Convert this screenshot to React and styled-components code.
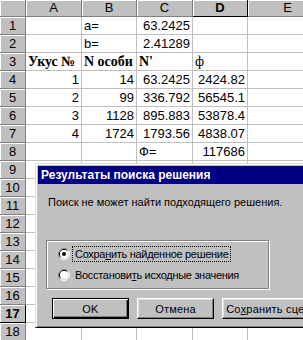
import React from 'react'
import styled, { createGlobalStyle, css } from 'styled-components'

const GlobalStyle = createGlobalStyle`
    html, body {
        margin: 0;
        padding: 0;
        width: 303px;
        height: 340px;
        overflow: hidden;
        background: #ffffff;
    }
`

const columns = ['A', 'B', 'C', 'D', 'E']

// each row: cells for A..E, a cell is text or { t, left, bold, serif }
const rows = [
    ['', { t: 'a=', left: true }, '63.2425', '', ''],
    ['', { t: 'b=', left: true }, '2.41289', '', ''],
    [
        { t: 'Укус №', left: true, bold: true, serif: true },
        { t: 'N особи', left: true, bold: true, serif: true },
        { t: "N'", left: true, bold: true, serif: true },
        { t: 'ф', left: true, serif: true },
        '',
    ],
    ['1', '14', '63.2425', '2424.82', ''],
    ['2', '99', '336.792', '56545.1', ''],
    ['3', '1128', '895.883', '53878.4', ''],
    ['4', '1724', '1793.56', '4838.07', ''],
    ['', '', { t: 'Ф=', left: true }, '117686', ''],
]

function Radio({ checked }) {
    return (
        <RadioIcon width="12" height="12" viewBox="0 0 12 12">
            <path d="M2.11 9.89 A5.5 5.5 0 0 1 9.89 2.11" stroke="#808080" fill="none" />
            <path d="M9.89 2.11 A5.5 5.5 0 0 1 2.11 9.89" stroke="#ffffff" fill="none" />
            <path d="M2.82 9.18 A4.5 4.5 0 0 1 9.18 2.82" stroke="#000000" fill="none" />
            <path d="M9.18 2.82 A4.5 4.5 0 0 1 2.82 9.18" stroke="#dfdfdf" fill="none" />
            <circle cx="6" cy="6" r="4" fill="#ffffff" />
            {checked && <circle cx="6" cy="6" r="2" fill="#000000" />}
        </RadioIcon>
    )
}

function App() {
    return (
        <Screen>
            <GlobalStyle />
            <Sheet>
                <Corner />
                {columns.map(c => (
                    <ColHeader key={c} $selected={c === 'D'}>{c}</ColHeader>
                ))}
                {Array.from({ length: 18 }, (_, i) => {
                    const data = rows[i] || ['', '', '', '', '']
                    return (
                        <React.Fragment key={i}>
                            <RowHeader $selected={i === 16}>{i + 1}</RowHeader>
                            {data.map((cell, j) => {
                                const c = typeof cell === 'string' ? { t: cell } : cell
                                return (
                                    <Cell key={j} $left={c.left} $bold={c.bold} $serif={c.serif}>
                                        {c.t}
                                    </Cell>
                                )
                            })}
                        </React.Fragment>
                    )
                })}
            </Sheet>

            <Dialog>
                <TitleBar>Результаты поиска решения</TitleBar>
                <DialogBody>
                    <Message>Поиск не может найти подходящего решения.</Message>
                    <GroupBox>
                        <RadioRow>
                            <Radio checked />
                            <RadioLabel $focused>
                                Сохра<u>н</u>ить найденное решение
                            </RadioLabel>
                        </RadioRow>
                        <RadioRow>
                            <Radio />
                            <RadioLabel>
                                Восстанови<u>т</u>ь исходные значения
                            </RadioLabel>
                        </RadioRow>
                    </GroupBox>
                    <ButtonRow>
                        <Button $default>OK</Button>
                        <Button>Отмена</Button>
                        <Button $wide>Со<u>х</u>ранить сценарий...</Button>
                    </ButtonRow>
                </DialogBody>
            </Dialog>
        </Screen>
    )
}

const Screen = styled.div`
    position: relative;
    width: 303px;
    height: 340px;
    overflow: hidden;
    background: #ffffff;
`

const Sheet = styled.div`
    display: grid;
    grid-template-columns: 26px 56px 55px 56px 55px 80px;
    grid-template-rows: 17px repeat(18, 18px);
    font-family: "Liberation Sans", Arial, sans-serif;
    font-size: 13px;
    color: #000000;
`

const headerBase = css`
    box-sizing: border-box;
    background: #c0c0c0;
    border-right: 1px solid #808080;
    border-bottom: 1px solid #808080;
    box-shadow: inset 1px 1px 0 #ffffff;
    text-align: center;
    white-space: nowrap;
`

const Corner = styled.div`
    ${headerBase}
`

const ColHeader = styled.div`
    ${headerBase}
    line-height: 16px;
    font-weight: ${p => (p.$selected ? 'bold' : 'normal')};
    ${p => p.$selected && css`
        border-right-color: #000000;
        border-bottom-color: #000000;
    `}
`

const RowHeader = styled.div`
    ${headerBase}
    line-height: 17px;
    font-weight: ${p => (p.$selected ? 'bold' : 'normal')};
    ${p => p.$selected && css`
        border-right-color: #000000;
        border-bottom-color: #000000;
    `}
`

const Cell = styled.div`
    box-sizing: border-box;
    border-right: 1px solid #c0c0c0;
    border-bottom: 1px solid #c0c0c0;
    padding: 0 2px;
    line-height: 17px;
    white-space: nowrap;
    text-align: ${p => (p.$left ? 'left' : 'right')};
    font-weight: ${p => (p.$bold ? 'bold' : 'normal')};
    font-family: ${p => (p.$serif ? '"Liberation Serif", "Times New Roman", serif' : 'inherit')};
    font-size: ${p => (p.$serif ? '14px' : '13px')};
`

const Dialog = styled.div`
    position: absolute;
    left: 35px;
    top: 163px;
    width: 300px;
    height: 165px;
    box-sizing: border-box;
    padding: 2px;
    background: #c0c0c0;
    border: 1px solid;
    border-color: #dfdfdf #000000 #000000 #dfdfdf;
    box-shadow: inset 1px 1px 0 #ffffff, inset -1px -1px 0 #808080;
    font-family: "Liberation Sans", Arial, sans-serif;
    font-size: 11px;
    color: #000000;
`

const TitleBar = styled.div`
    height: 18px;
    line-height: 18px;
    padding-left: 3px;
    background: #000080;
    color: #ffffff;
    font-weight: bold;
    font-size: 12px;
    white-space: nowrap;
`

const DialogBody = styled.div`
    display: flex;
    flex-direction: column;
    padding: 11px 0 0 10px;
`

const Message = styled.div`
    line-height: 14px;
    white-space: nowrap;
`

const GroupBox = styled.div`
    display: flex;
    flex-direction: column;
    gap: 3px;
    box-sizing: border-box;
    width: 223px;
    height: 49px;
    margin: 31px 0 0 -2px;
    padding: 4px 0 0 11px;
    border: 1px solid #808080;
    box-shadow: inset 1px 1px 0 #ffffff, 1px 1px 0 #ffffff;
`

const RadioRow = styled.div`
    display: flex;
    align-items: center;
    height: 18px;
    gap: 2px;
`

const RadioIcon = styled.svg`
    flex: none;
`

const RadioLabel = styled.span`
    padding: 1px 2px;
    white-space: nowrap;
    letter-spacing: -0.3px;
    border: 1px dotted ${p => (p.$focused ? '#000000' : 'transparent')};
`

const ButtonRow = styled.div`
    display: flex;
    gap: 8px;
    margin: 9px 0 0 4px;
`

const Button = styled.div`
    flex: none;
    box-sizing: border-box;
    width: ${p => (p.$wide ? '128px' : '77px')};
    height: 21px;
    display: flex;
    align-items: center;
    justify-content: center;
    background: #c0c0c0;
    white-space: nowrap;
    letter-spacing: 0.2px;
    border: 1px solid;
    border-color: #ffffff #000000 #000000 #ffffff;
    box-shadow: inset -1px -1px 0 #808080, inset 1px 1px 0 #dfdfdf;
    ${p => p.$default && css`
        border-color: #000000;
        box-shadow: inset 1px 1px 0 #ffffff, inset -1px -1px 0 #000000, inset -2px -2px 0 #808080;
    `}
`

export default App
